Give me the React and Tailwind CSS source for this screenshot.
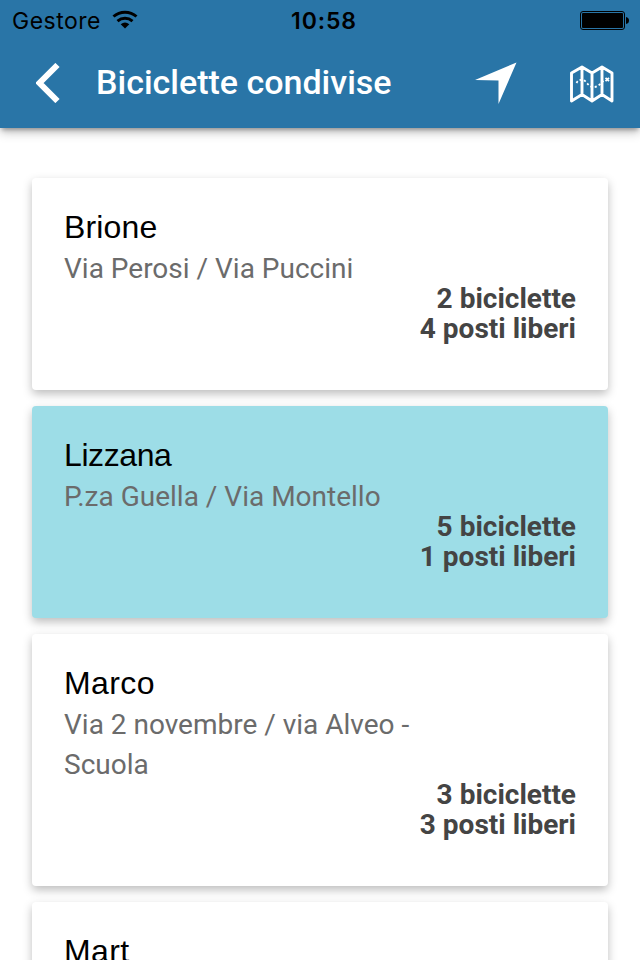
const stations = [
  { name: "Brione", address: "Via Perosi / Via Puccini", bikes: 2, free: 4, nameClass: "tracking-[0.15px]" },
  { name: "Lizzana", address: "P.za Guella / Via Montello", bikes: 5, free: 1, highlighted: true, nameClass: "tracking-[-0.4px]" },
  { name: "Marco", address: "Via 2 novembre / via Alveo - Scuola", bikes: 3, free: 3, nameClass: "tracking-[0.4px]" },
  { name: "Mart", nameClass: "tracking-[0.4px]" },
];

function StatusBar() {
  return (
    <div className="grid h-10 grid-cols-3 items-center pl-3 pr-[11px] pt-[2px] font-['Inter',sans-serif] text-[23px] leading-[38px] text-black">
      <div className="flex items-center gap-[11px]">
        <span className="tracking-[0.5px]">Gestore</span>
        <svg className="mb-[2px]" width="26" height="20" viewBox="0 0 26 20" fill="none" stroke="#000" strokeWidth="3">
          <path d="M1.500 6.500C8 .7 18 .7 24.500 6.500" />
          <path d="M5.500 11.200C10 7.400 16 7.400 20.500 11.200" />
          <path d="M13 18.500L8.700 14.200Q13 10.800 17.300 14.200Z" fill="#000" stroke="none" />
        </svg>
      </div>
      <span className="pl-[7px] text-center font-semibold tracking-[0.9px]">10:58</span>
      <svg className="justify-self-end" width="49" height="20" viewBox="0 0 49 20">
        <rect x=".5" y=".5" width="44" height="18" rx="2.500" fill="none" stroke="#000" />
        <rect x="2" y="2" width="41" height="15" rx="1" />
        <path d="M46 6Q49 6.500 49 9.500T46 13Z" />
      </svg>
    </div>
  );
}

function Header() {
  return (
    <header className="relative z-10 h-32 bg-[#2975a7] shadow-[0_4px_10px_rgba(0,0,0,0.26),0_4px_4px_-2px_rgba(0,0,0,0.26)]">
      <StatusBar />
      <div className="flex h-[88px] items-center pb-[2px] pl-9 pr-[26px] text-white">
        <svg width="24" height="40" viewBox="0 0 24 40" fill="none" stroke="currentColor" strokeWidth="6">
          <path d="M21.500 2L3.500 20L21.500 38" />
        </svg>
        <h1 className="ml-9 flex-1 whitespace-nowrap pb-[2px] font-['Roboto',sans-serif] text-[34px] font-medium">
          Biciclette condivise
        </h1>
        <svg width="42" height="42" viewBox="0 0 42 42" fill="currentColor">
          <path d="M41.500 0.500L23.500 42V18.500L0 18Z" />
        </svg>
        <svg className="ml-[53px] mt-px" width="44" height="38" viewBox="0 0 44 38" fill="none" stroke="currentColor">
          <path strokeWidth="2.900" strokeLinejoin="round" d="M1.500 8L12 2L22 8L32 2L42 8V36L32 29.500L22 36L12 29.500L1.500 36ZM12 2V29.500M22 8V36M32 2V29.500" />
          <path strokeWidth="1.800" strokeDasharray="2.200 2.200" d="M6.500 18C8 15 10 14.500 13 15S18 21 22 22S30 20 34 15" />
          <path strokeWidth="1.800" d="M35.500 12.800L39 16.200M39 12.800L35.500 16.200" />
        </svg>
      </div>
    </header>
  );
}

function StationCard({ name, address, bikes, free, highlighted, nameClass }) {
  return (
    <article
      className={`min-h-[212px] rounded-[4px] px-8 pb-[46px] pt-[28px] shadow-[0_4px_10px_rgba(0,0,0,0.26)] ${
        highlighted ? "bg-[#9ddde7]" : "bg-white"
      }`}
    >
      <h2 className={`font-['Liberation_Sans',sans-serif] text-[32px] leading-[42px] text-black ${nameClass}`}>{name}</h2>
      {address && (
        <>
          <p className="w-[384px] pt-px font-['Roboto',sans-serif] text-[28px] leading-10 text-[#6b6b6b]">{address}</p>
          <div className="-mt-[5px] text-right font-['Roboto',sans-serif] text-[28px] font-bold leading-[30px] text-[#444]">
            <div>{bikes} biciclette</div>
            <div>{free} posti liberi</div>
          </div>
        </>
      )}
    </article>
  );
}

export default function App() {
  return (
    <div className="h-[960px] w-[640px] overflow-hidden bg-white">
      <Header />
      <main className="flex flex-col gap-4 px-8 pt-[50px]">
        {stations.map((station) => (
          <StationCard key={station.name} {...station} />
        ))}
      </main>
    </div>
  );
}
